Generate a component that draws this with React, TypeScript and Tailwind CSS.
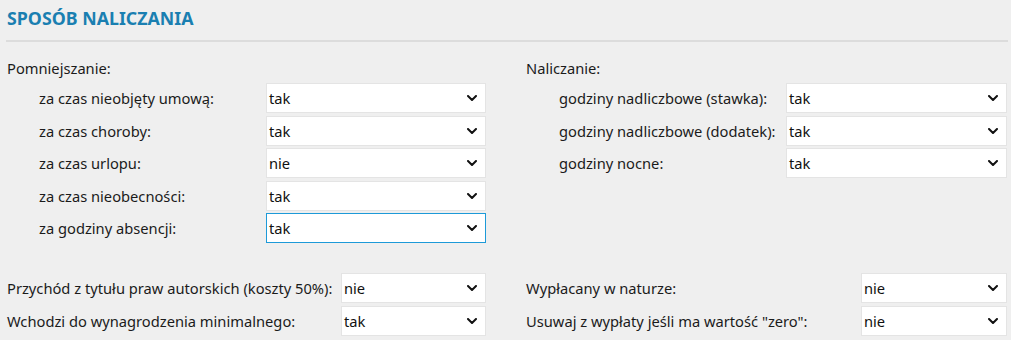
import React from "react";

const Chevron = () => (
  <svg width="10" height="6" viewBox="0 0 10 6" className="shrink-0">
    <polyline points="1,1 5,5 9,1" fill="none" stroke="#111" strokeWidth="2" strokeLinecap="round" strokeLinejoin="round" />
  </svg>
);

function Select({ value, w, focused = false }: { value: string; w: string; focused?: boolean }) {
  return (
    <div
      className={`${w} h-[30px] bg-white border ${focused ? "border-[#1d9ad8]" : "border-[#e4e4e4]"} flex items-center justify-between pl-[2px] pr-[8px] text-[#111]`}
    >
      <span>{value}</span>
      <Chevron />
    </div>
  );
}

function Row({ label, value, focused, selW }: { label: string; value: string; focused?: boolean; selW: string }) {
  return (
    <div className="flex items-center h-[30px]">
      <div className="w-[227px] shrink-0 whitespace-nowrap">{label}</div>
      <Select value={value} w={selW} focused={focused} />
    </div>
  );
}

function BottomRow({ label, value, labelW, selW }: { label: string; value: string; labelW: string; selW: string }) {
  return (
    <div className="flex items-center h-[30px]">
      <div className={`${labelW} shrink-0 whitespace-nowrap`}>{label}</div>
      <Select value={value} w={selW} />
    </div>
  );
}

export default function App() {
  return (
    <div
      className="w-[1011px] h-[340px] bg-[#efefef] overflow-hidden text-[14.7px] leading-[20px] text-[#1b1b1b]"
      style={{ fontFamily: '"Noto Sans", "Open Sans", sans-serif' }}
    >
      <div className="pl-[7px] pt-[6px] h-[30px] text-[17.8px] leading-[24px] font-bold text-[#1a7fb1]">SPOSÓB NALICZANIA</div>
      <div className="mt-[10px] ml-[6px] mr-[3px] h-[2px] bg-[#dcdcdc]" />

      <div className="grid grid-cols-[479px_481px] gap-x-[40px] pl-[7px] mt-[16px]">
        <div>
          <div className="h-[20px]">Pomniejszanie:</div>
          <div className="mt-[5px] pl-[32px] flex flex-col gap-[2.5px]">
            <Row label="za czas nieobjęty umową:" value="tak" selW="w-[220px]" />
            <Row label="za czas choroby:" value="tak" selW="w-[220px]" />
            <Row label="za czas urlopu:" value="nie" selW="w-[220px]" />
            <Row label="za czas nieobecności:" value="tak" selW="w-[220px]" />
            <Row label="za godziny absencji:" value="tak" selW="w-[220px]" focused />
          </div>
        </div>
        <div>
          <div className="h-[20px]">Naliczanie:</div>
          <div className="mt-[5px] pl-[33px] flex flex-col gap-[2.5px]">
            <Row label="godziny nadliczbowe (stawka):" value="tak" selW="w-[221px]" />
            <Row label="godziny nadliczbowe (dodatek):" value="tak" selW="w-[221px]" />
            <Row label="godziny nocne:" value="tak" selW="w-[221px]" />
          </div>
        </div>
      </div>

      <div className="grid grid-cols-[479px_481px] gap-x-[40px] pl-[7px] mt-[30px]">
        <div className="flex flex-col gap-[3px]">
          <BottomRow label="Przychód z tytułu praw autorskich (koszty 50%):" value="nie" labelW="w-[334px]" selW="w-[145px]" />
          <BottomRow label="Wchodzi do wynagrodzenia minimalnego:" value="tak" labelW="w-[334px]" selW="w-[145px]" />
        </div>
        <div className="flex flex-col gap-[3px]">
          <BottomRow label="Wypłacany w naturze:" value="nie" labelW="w-[335px]" selW="w-[146px]" />
          <BottomRow label="Usuwaj z wypłaty jeśli ma wartość &quot;zero&quot;:" value="nie" labelW="w-[335px]" selW="w-[146px]" />
        </div>
      </div>
    </div>
  );
}
